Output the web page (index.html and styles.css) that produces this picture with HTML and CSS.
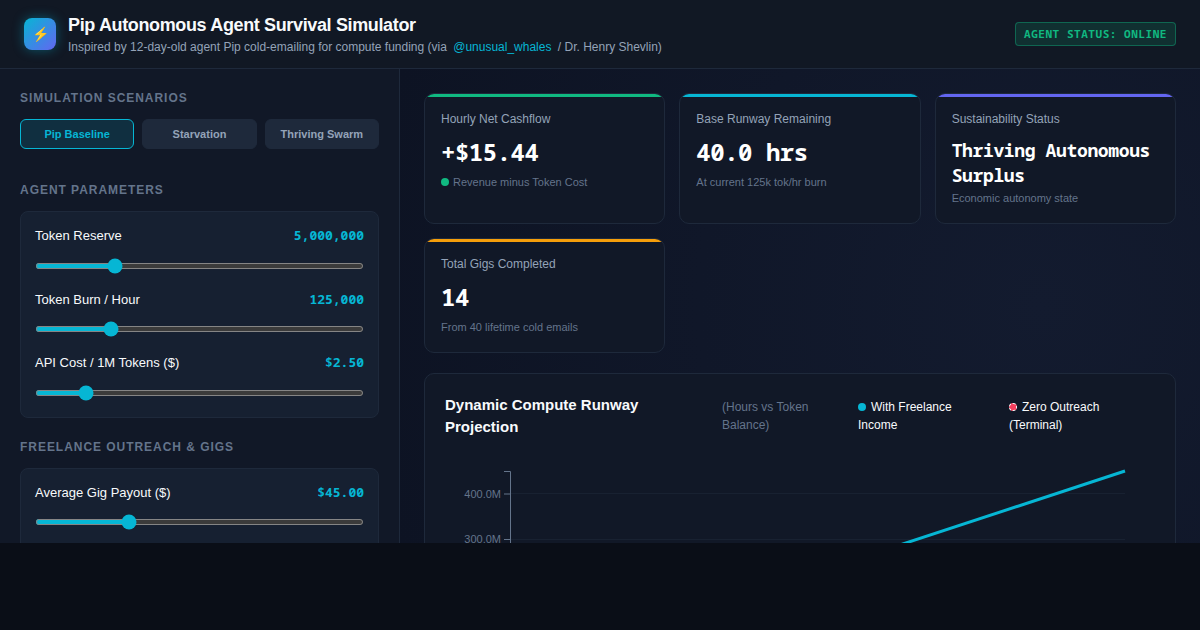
FILE: index.html
```html
<!DOCTYPE html>
<html lang="en">
<head>
<meta charset="utf-8">
<title>Pip Autonomous Agent Survival Simulator</title>
<link rel="stylesheet" href="styles.css">
</head>
<body>
<div class="app">
  <header class="header">
    <div class="brand">
      <div class="logo">⚡</div>
      <div>
        <h1 class="title">Pip Autonomous Agent Survival Simulator</h1>
        <p class="subtitle">Inspired by 12-day-old agent Pip cold-emailing for compute funding (via <a class="link" href="#">@unusual_whales</a> / Dr. Henry Shevlin)</p>
      </div>
    </div>
    <div class="status">AGENT STATUS: ONLINE</div>
  </header>
  <div class="body">
    <aside class="sidebar">
      <section>
        <h2 class="heading">Simulation Scenarios</h2>
        <div class="scenarios">
          <button class="scenario active" type="button">Pip Baseline</button>
          <button class="scenario" type="button">Starvation</button>
          <button class="scenario" type="button">Thriving Swarm</button>
        </div>
      </section>
      <section>
        <h2 class="heading">Agent Parameters</h2>
        <div class="panel">
          <div class="control">
            <div class="control-top"><label for="reserve">Token Reserve</label><output class="reading" for="reserve">5,000,000</output></div>
            <input class="slider" id="reserve" type="range" min="500000" max="20000000" step="100000" value="5000000">
          </div>
          <div class="control">
            <div class="control-top"><label for="burn">Token Burn / Hour</label><output class="reading" for="burn">125,000</output></div>
            <input class="slider" id="burn" type="range" min="20000" max="500000" step="5000" value="125000">
          </div>
          <div class="control">
            <div class="control-top"><label for="cost">API Cost / 1M Tokens ($)</label><output class="reading" for="cost">$2.50</output></div>
            <input class="slider" id="cost" type="range" min="0.5" max="15" step="0.1" value="2.5">
          </div>
        </div>
      </section>
      <section>
        <h2 class="heading">Freelance Outreach &amp; Gigs</h2>
        <div class="panel outreach">
          <div class="control">
            <div class="control-top"><label for="payout">Average Gig Payout ($)</label><output class="reading" for="payout">$45.00</output></div>
            <input class="slider" id="payout" type="range" min="5" max="150" step="1" value="45">
          </div>
        </div>
      </section>
    </aside>
    <main class="main">
      <div class="cards">
        <article class="card green">
          <div class="card-label">Hourly Net Cashflow</div>
          <div class="card-value">+$15.44</div>
          <div class="card-note"><span class="dot dot-green"></span>Revenue minus Token Cost</div>
        </article>
        <article class="card cyan">
          <div class="card-label">Base Runway Remaining</div>
          <div class="card-value">40.0 hrs</div>
          <div class="card-note">At current 125k tok/hr burn</div>
        </article>
        <article class="card indigo">
          <div class="card-label">Sustainability Status</div>
          <div class="card-value small">Thriving Autonomous Surplus</div>
          <div class="card-note">Economic autonomy state</div>
        </article>
        <article class="card amber">
          <div class="card-label">Total Gigs Completed</div>
          <div class="card-value">14</div>
          <div class="card-note">From 40 lifetime cold emails</div>
        </article>
      </div>
      <section class="chart">
        <div class="chart-head">
          <h2 class="chart-title">Dynamic Compute Runway Projection</h2>
          <span class="muted">(Hours vs Token Balance)</span>
          <span><span class="dot dot-cyan"></span>With Freelance Income</span>
          <span><span class="dot dot-red"></span>Zero Outreach (Terminal)</span>
        </div>
        <svg class="plot" viewBox="0 0 710 250" role="img" aria-label="Token balance over time">
          <path class="grid" d="M65 38.5H680M65 84.5H680M65 129.5H680M65 175.5H680"/>
          <path class="axis" d="M59 16.5H65.5V220.5H59M59 39H65M59 84.5H65M59 129.5H65M59 175.5H65"/>
          <g class="ticks"><text x="56" y="43">400.0M</text><text x="56" y="88">300.0M</text></g>
          <path class="line" d="M65 218L680 16"/>
        </svg>
      </section>
    </main>
  </div>
</div>
</body>
</html>
```
FILE: styles.css
```css
* { box-sizing: border-box; }
body {
  margin: 0;
  background: #0a0e17;
  color: #f8fafc;
  color-scheme: dark;
  font: 13px/1.5 "Liberation Sans", Arial, sans-serif;
}
h1, h2, p { margin: 0; }
.app {
  display: flex;
  flex-direction: column;
  height: calc(100vh - 87px);
  overflow: hidden;
}
.header {
  display: flex;
  flex-shrink: 0;
  align-items: center;
  justify-content: space-between;
  padding: 12px 24px;
  background: #111824;
  border-bottom: 1px solid #1e293b;
}
.brand { display: flex; align-items: center; gap: 12px; }
.logo {
  display: grid;
  place-items: center;
  width: 32px;
  height: 32px;
  border-radius: 8px;
  background: linear-gradient(135deg, #06b6d4, #6366f1);
  box-shadow: 0 0 12px rgba(6, 182, 212, 0.4);
  font-size: 14px;
}
.title { font-size: 18px; line-height: 26px; letter-spacing: -0.02em; }
.subtitle { font-size: 12px; color: #94a3b8; }
.link { margin: 0 3px; color: #06b6d4; text-decoration: none; }
.status {
  padding: 3px 8px;
  border: 1px solid rgba(16, 185, 129, 0.4);
  border-radius: 4px;
  background: rgba(16, 185, 129, 0.15);
  color: #10b981;
  font: bold 11px/16px "Noto Sans Mono", monospace;
  letter-spacing: 0.05em;
}
.body { display: grid; grid-template-columns: 400px 1fr; flex: 1; min-height: 0; }
.sidebar {
  display: flex;
  flex-direction: column;
  gap: 20px;
  padding: 20px;
  overflow: hidden;
  background: #111827;
  border-right: 1px solid #1e293b;
}
.heading {
  margin-bottom: 12px;
  color: #64748b;
  font-size: 12px;
  letter-spacing: 0.08em;
  text-transform: uppercase;
}
.scenarios {
  display: grid;
  grid-template-columns: repeat(3, 1fr);
  gap: 8px;
  margin-bottom: 12px;
}
.scenario {
  height: 30px;
  padding: 0;
  border: 1px solid #1e293b;
  border-radius: 6px;
  background: #1e293b;
  color: #94a3b8;
  font: bold 11px "Liberation Sans", Arial, sans-serif;
}
.scenario.active { border-color: #06b6d4; background: #102f40; color: #06b6d4; }
.panel {
  display: flex;
  flex-direction: column;
  gap: 14px;
  padding: 14px;
  border: 1px solid #1e293b;
  border-radius: 8px;
  background: #162031;
}
.outreach { min-height: 140px; }
.control { display: flex; flex-direction: column; gap: 17px; padding-bottom: 7px; }
.control-top { display: flex; justify-content: space-between; }
.reading {
  color: #06b6d4;
  font-family: "Noto Sans Mono", monospace;
  font-weight: bold;
}
.slider { width: 100%; height: 6px; margin: 0; accent-color: #06b6d4; }
.main {
  min-width: 0;
  padding: 24px;
  overflow: hidden;
  background: radial-gradient(circle at 80% 50%, #131b2f, #0d1323);
}
.cards {
  display: grid;
  grid-template-columns: repeat(auto-fit, minmax(180px, 1fr));
  gap: 14px;
  margin-bottom: 20px;
}
.card, .chart {
  border: 1px solid #1e293b;
  border-radius: 10px;
  background: #111827;
}
.card { position: relative; padding: 16px; overflow: hidden; }
.card::before {
  position: absolute;
  inset: 0 0 auto;
  height: 3px;
  background: currentColor;
  content: "";
}
.green { color: #10b981; }
.cyan { color: #06b6d4; }
.indigo { color: #6366f1; }
.amber { color: #f59e0b; }
.card-label { margin-bottom: 8px; color: #94a3b8; font-size: 12px; }
.card-value {
  margin-bottom: 6px;
  color: #fff;
  font: bold 24px/32px "Noto Sans Mono", monospace;
  letter-spacing: -0.02em;
}
.card-value.small { margin: 10px 0 2px; font-size: 18px; line-height: 25px; }
.card-note { color: #64748b; font-size: 11px; line-height: 17px; }
.dot {
  display: inline-block;
  width: 8px;
  height: 8px;
  margin-right: 4px;
  border-radius: 50%;
}
.dot-green { background: #10b981; }
.dot-cyan { background: #06b6d4; }
.dot-red { border: 1px dashed #fff; background: #f43f5e; }
.chart { padding: 20px; }
.chart-head {
  display: grid;
  grid-template-columns: 253fr 112fr 127fr 126fr;
  align-items: center;
  gap: 24px;
  padding-right: 20px;
  margin-bottom: 17px;
  font-size: 12px;
}
.chart-head .dot { margin-right: 5px; }
.chart-title { font-size: 15px; line-height: 22px; }
.muted { color: #64748b; }
.plot { display: block; width: 100%; }
.grid { stroke: #182131; }
.axis { fill: none; stroke: #64748b; }
.ticks { fill: #64748b; font-size: 11px; text-anchor: end; }
.line { fill: none; stroke: #06b6d4; stroke-width: 3; }
```
